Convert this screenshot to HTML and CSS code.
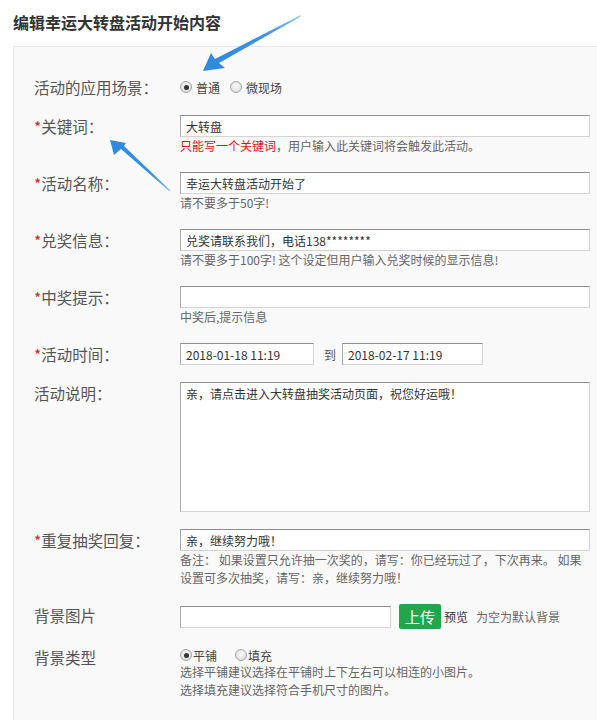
FILE: index.html
```html
<!DOCTYPE html>
<html lang="zh-CN">
<head>
    <meta charset="UTF-8">
    <title>编辑幸运大转盘活动开始内容</title>
    <link rel="stylesheet" href="styles.css">
</head>
<body>
    <!-- Page title -->
    <h1 class="page-title">编辑幸运大转盘活动开始内容</h1>

    <!-- Edit form -->
    <div class="form-panel">
        <div class="form-row">
            <div class="form-label">活动的应用场景：</div>
            <div class="form-field radio-line">
                <label class="radio"><span class="radio-dot checked"></span>普通</label>
                <label class="radio"><span class="radio-dot"></span>微现场</label>
            </div>
        </div>

        <div class="form-row">
            <div class="form-label"><span class="req">*</span>关键词：</div>
            <div class="form-field">
                <input class="text-input" type="text" value="大转盘">
                <div class="help"><span class="help-red">只能写一个关键词</span>，用户输入此关键词将会触发此活动。</div>
            </div>
        </div>

        <div class="form-row">
            <div class="form-label"><span class="req">*</span>活动名称：</div>
            <div class="form-field">
                <input class="text-input" type="text" value="幸运大转盘活动开始了">
                <div class="help">请不要多于50字!</div>
            </div>
        </div>

        <div class="form-row">
            <div class="form-label"><span class="req">*</span>兑奖信息：</div>
            <div class="form-field">
                <input class="text-input" type="text" value="兑奖请联系我们，电话138********">
                <div class="help">请不要多于100字! 这个设定但用户输入兑奖时候的显示信息!</div>
            </div>
        </div>

        <div class="form-row">
            <div class="form-label"><span class="req">*</span>中奖提示：</div>
            <div class="form-field">
                <input class="text-input" type="text" value="">
                <div class="help">中奖后,提示信息</div>
            </div>
        </div>

        <div class="form-row">
            <div class="form-label"><span class="req">*</span>活动时间：</div>
            <div class="form-field date-line">
                <input class="text-input date-start" type="text" value="2018-01-18 11:19">
                <span class="date-to">到</span>
                <input class="text-input date-end" type="text" value="2018-02-17 11:19">
            </div>
        </div>

        <div class="form-row">
            <div class="form-label">活动说明：</div>
            <div class="form-field">
                <textarea class="text-area">亲，请点击进入大转盘抽奖活动页面，祝您好运哦！</textarea>
            </div>
        </div>

        <div class="form-row">
            <div class="form-label"><span class="req">*</span>重复抽奖回复：</div>
            <div class="form-field">
                <input class="text-input" type="text" value="亲，继续努力哦！">
                <div class="help">备注： 如果设置只允许抽一次奖的，请写：你已经玩过了，下次再来。 如果设置可多次抽奖，请写：亲，继续努力哦！</div>
            </div>
        </div>

        <div class="form-row">
            <div class="form-label">背景图片</div>
            <div class="form-field upload-line">
                <input class="text-input upload-input" type="text" value="">
                <button class="upload-btn">上传</button>
                <span class="preview">预览</span>
                <span class="upload-note">为空为默认背景</span>
            </div>
        </div>

        <div class="form-row">
            <div class="form-label">背景类型</div>
            <div class="form-field">
                <div class="radio-line small">
                    <label class="radio"><span class="radio-dot checked"></span>平铺</label>
                    <label class="radio"><span class="radio-dot"></span>填充</label>
                </div>
                <div class="help">选择平铺建议选择在平铺时上下左右可以相连的小图片。<br>选择填充建议选择符合手机尺寸的图片。</div>
            </div>
        </div>
    </div>

    <!-- Annotation arrows drawn over the screenshot -->
    <svg class="arrows" width="597" height="720" viewBox="0 0 597 720">
        <defs>
            <linearGradient id="fade1" x1="300" y1="16" x2="205" y2="70" gradientUnits="userSpaceOnUse">
                <stop offset="0" stop-color="#8cc0f0"/>
                <stop offset="0.35" stop-color="#3c93e4"/>
                <stop offset="1" stop-color="#2f88e0"/>
            </linearGradient>
            <linearGradient id="fade2" x1="170" y1="190" x2="112" y2="141" gradientUnits="userSpaceOnUse">
                <stop offset="0" stop-color="#8cc0f0"/>
                <stop offset="0.3" stop-color="#3c93e4"/>
                <stop offset="1" stop-color="#2f88e0"/>
            </linearGradient>
        </defs>
        <polygon fill="url(#fade1)" points="301,15 300,17 219,63 225,68 203,71 211,53 215,59"/>
        <polygon fill="url(#fade2)" points="171,191 169,191 121,149 114,155 110,140 126,143 124,146"/>
    </svg>
</body>
</html>
```

FILE: styles.css
```css
body {
    margin: 0;
    background-color: #fff;
    font-family: "Noto Sans CJK SC", "Liberation Sans", sans-serif;
    color: #333;
    position: relative;
    overflow: hidden;
}

.page-title {
    margin: 0;
    padding: 11px 0 0 13px;
    height: 35px;
    font-size: 16px;
    line-height: 22px;
    font-weight: bold;
    color: #333;
}

.form-panel {
    margin-left: 13px;
    padding: 29px 7px 40px 20px;
    border-top: 1px solid #e8e8e8;
    border-left: 1px solid #e8e8e8;
    background-color: #f9f9f9;
    min-height: 700px;
}

.form-row {
    display: flex;
    margin-bottom: 17px;
}

.form-label {
    width: 146px;
    flex-shrink: 0;
    font-size: 15.5px;
    line-height: 22px;
    color: #555;
}

.req {
    color: #d22;
}

.form-field {
    flex: 1;
    min-width: 0;
}

.text-input {
    display: block;
    box-sizing: border-box;
    width: 100%;
    height: 22px;
    margin: 0;
    padding: 0 5px;
    border: 1px solid #d4d4d4;
    border-top-color: #8e8e8e;
    border-left-color: #a8a8a8;
    background-color: #fff;
    font-family: inherit;
    font-size: 12px;
    color: #333;
    outline: none;
}

.help {
    font-size: 12px;
    line-height: 18px;
    color: #666;
    padding-right: 8px;
}

.help-red {
    color: #e01010;
}

/* radio options */
.radio-line {
    display: flex;
    align-items: center;
    height: 22px;
    font-size: 12px;
    color: #444;
}

.radio {
    display: flex;
    align-items: center;
    margin-right: 10px;
}

.radio-dot {
    box-sizing: border-box;
    width: 12px;
    height: 12px;
    margin-right: 4px;
    border-radius: 50%;
    border: 1px solid #a5a5a5;
    background: radial-gradient(circle at 50% 40%, #fafafa, #d6d6d6);
    display: flex;
    align-items: center;
    justify-content: center;
}

.radio-dot.checked::after {
    content: "";
    width: 5px;
    height: 5px;
    border-radius: 50%;
    background-color: #333;
}

.radio-line.small {
    height: 16px;
    margin-top: 1px;
}

.radio-line.small .radio {
    margin-right: 18px;
}

.radio-line.small .radio-dot {
    margin-right: 1px;
}

/* activity time */
.date-line {
    display: flex;
    align-items: center;
}

.date-start {
    width: 134px;
}

.date-end {
    width: 141px;
}

.date-to {
    font-size: 12px;
    color: #555;
    margin: 0 6px 0 10px;
}

.text-area {
    display: block;
    box-sizing: border-box;
    width: 100%;
    height: 130px;
    margin: 0;
    padding: 3px 5px;
    border: 1px solid #d4d4d4;
    border-top-color: #8e8e8e;
    border-left-color: #a8a8a8;
    background-color: #fff;
    font-family: inherit;
    font-size: 12px;
    line-height: 16px;
    color: #333;
    resize: none;
    outline: none;
}

/* background image upload */
.upload-line {
    display: flex;
    align-items: center;
}

.upload-input {
    width: 211px;
}

.upload-btn {
    margin-left: 8px;
    height: 25px;
    padding: 0 6px;
    border: none;
    border-radius: 2px;
    background-color: #21a64c;
    color: #fff;
    font-family: inherit;
    font-size: 15px;
    line-height: 25px;
}

.preview {
    margin-left: 3px;
    font-size: 12px;
    color: #333;
}

.upload-note {
    margin-left: 8px;
    font-size: 12px;
    color: #666;
}

.arrows {
    position: absolute;
    left: 0;
    top: 0;
    pointer-events: none;
}
```
